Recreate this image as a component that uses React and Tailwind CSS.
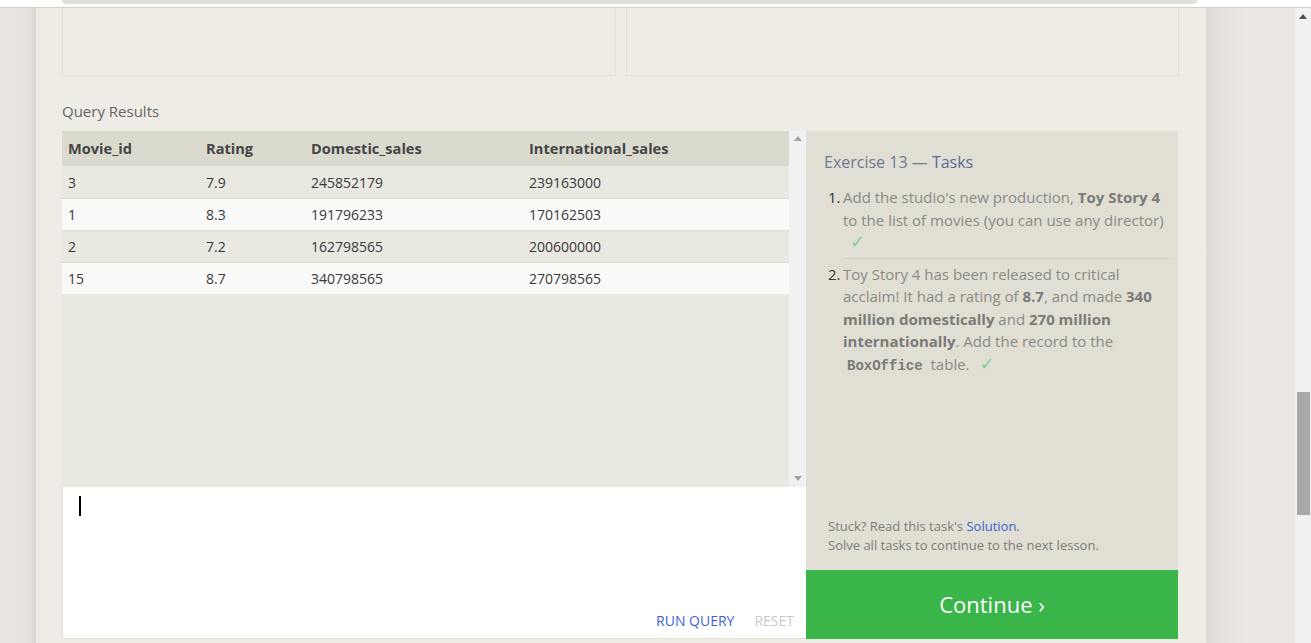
import React from 'react';

const rows = [
  ['3', '7.9', '245852179', '239163000'],
  ['1', '8.3', '191796233', '170162503'],
  ['2', '7.2', '162798565', '200600000'],
  ['15', '8.7', '340798565', '270798565'],
];

const cols = 'grid grid-cols-[138px_105px_218px_1fr]';

const Check = () => <span className="text-[#86cf95] font-['DejaVu_Sans',sans-serif] text-[18px] leading-none">✓</span>;

const App = () => {
  return (
    <div className="w-[1311px] h-[643px] overflow-hidden flex flex-col bg-white font-['Open_Sans',sans-serif]">
      {/* Top strip */}
      <div className="h-[8px] shrink-0 bg-white border-b border-[#d2d2d2] pl-[62px] pr-[114px]">
        <div className="h-[4px] bg-[#dedede] rounded-b-[6px]" />
      </div>

      <div className="flex flex-1 min-h-0">
        {/* Left gutter */}
        <div className="w-[36px] shrink-0 bg-[linear-gradient(to_right,#eae6e3,#e6e2df_70%,#dcd8d5)]" />

        {/* Main card */}
        <div className="w-[1170px] shrink-0 bg-[#efece5] pl-[26px] pr-[27px] flex flex-col">
          {/* Editor panes above */}
          <div className="flex gap-[10px] h-[68px]">
            <div className="flex-1 border border-t-0 border-[#e2dfd7]" />
            <div className="flex-1 border border-t-0 border-[#e2dfd7]" />
          </div>

          <div className="mt-[25px] h-[21px] text-[15px] leading-[21px] text-[#666]">Query Results</div>

          <div className="mt-[9px] flex h-[508px] pr-px">
            {/* Left: results + query editor */}
            <div className="w-[744px] flex flex-col">
              <div className="h-[356px] flex bg-[#e9e8e1]">
                <div className="flex-1">
                  <div className={`${cols} h-[35px] items-center bg-[#dbdacf] text-[14.6px] font-bold text-[#454545]`}>
                    <div className="pl-[6px]">Movie_id</div>
                    <div className="pl-[6px]">Rating</div>
                    <div className="pl-[6px]">Domestic_sales</div>
                    <div className="pl-[6px]">International_sales</div>
                  </div>
                  {rows.map((r, i) => (
                    <div
                      key={i}
                      className={`${cols} h-[32px] items-center text-[14px] text-[#3a3a3a] ${i > 0 ? 'border-t border-[#dedcd5]' : ''} ${i % 2 === 0 ? 'bg-[#e9e8e1]' : 'bg-[#f9f9f9]'}`}
                    >
                      {r.map((c, j) => (
                        <div key={j} className="pl-[6px]">{c}</div>
                      ))}
                    </div>
                  ))}
                </div>
                <div className="w-[17px] bg-[#f1f1f1] flex flex-col items-center justify-between pt-[5px] pb-[6px]">
                  <svg width="8" height="5" viewBox="0 0 8 5"><path d="M0 5 L4 0 L8 5 Z" fill="#a3a3a3" /></svg>
                  <svg width="8" height="5" viewBox="0 0 8 5"><path d="M0 0 L4 5 L8 0 Z" fill="#a3a3a3" /></svg>
                </div>
              </div>

              <div className="flex-1 bg-white border-l border-b border-[#e2e1d8] flex flex-col pl-[16px] pr-[12px]">
                <div className="mt-[9px] w-[2px] h-[20px] bg-black" />
                <div className="mt-auto mb-[7px] flex justify-end gap-[20px] text-[14px] leading-[20px]">
                  <span className="text-[#3f5fd8]">RUN QUERY</span>
                  <span className="text-[#c9c9c9]">RESET</span>
                </div>
              </div>
            </div>

            {/* Right: tasks */}
            <div className="w-[372px] flex flex-col">
              <div className="flex-1 bg-[#e1dfd4] pl-[18px] pr-[8px] pt-[19px] pb-[15px] flex flex-col">
                <div className="text-[16px] leading-[24px] text-[#707a92]">
                  Exercise 13 — <span className="text-[#5b6a98]">Tasks</span>
                </div>

                <ol className="mt-[12px] text-[15px] leading-[22.5px] text-[#8a8a88]">
                  <li className="flex pb-[4px]">
                    <span className="w-[19px] shrink-0 pl-[4px] text-[#333]">1.</span>
                    <div className="flex-1 border-b border-[#d2d0c6] pb-[4px]">
                      Add the studio's new production, <b className="text-[#7a7a78]">Toy Story 4</b> to the list of movies (you can use any director)
                      <div className="pl-[7px]"><Check /></div>
                    </div>
                  </li>
                  <li className="flex">
                    <span className="w-[19px] shrink-0 pl-[4px] text-[#333]">2.</span>
                    <div className="flex-1">
                      Toy Story 4 has been released to critical acclaim! It had a rating of <b className="text-[#7a7a78]">8.7</b>, and made <b className="text-[#7a7a78]">340 million domestically</b> and <b className="text-[#7a7a78]">270 million internationally</b>. Add the record to the{' '}
                      <code className="px-[4px] font-['Liberation_Mono',monospace] font-bold text-[14px] text-[#7a7a78]">BoxOffice</code> table. <span className="ml-[6px]"><Check /></span>
                    </div>
                  </li>
                </ol>

                <div className="mt-auto pl-[4px] text-[13px] leading-[19px] text-[#7c7c7a]">
                  <div>Stuck? Read this task's <span className="text-[#3a63d6]">Solution</span>.</div>
                  <div>Solve all tasks to continue to the next lesson.</div>
                </div>
              </div>
              <div className="h-[69px] bg-[#3ab54a] flex items-center justify-center text-white text-[22px]">
                Continue ›
              </div>
            </div>
          </div>
        </div>

        {/* Right gutter */}
        <div className="w-[89px] shrink-0 bg-[linear-gradient(to_right,#dfdbd8,#e7e2df_18px,#ece7e4_40px)]" />

        {/* Page scrollbar */}
        <div className="w-[16px] shrink-0 bg-[#f1f1f1] flex flex-col items-center">
          <svg className="mt-[6px]" width="8" height="5" viewBox="0 0 8 5"><path d="M0 5 L4 0 L8 5 Z" fill="#505050" /></svg>
          <div className="mt-[373px] w-[13px] h-[123px] bg-[#a8a8a8]" />
        </div>
      </div>
    </div>
  );
};

export default App;
